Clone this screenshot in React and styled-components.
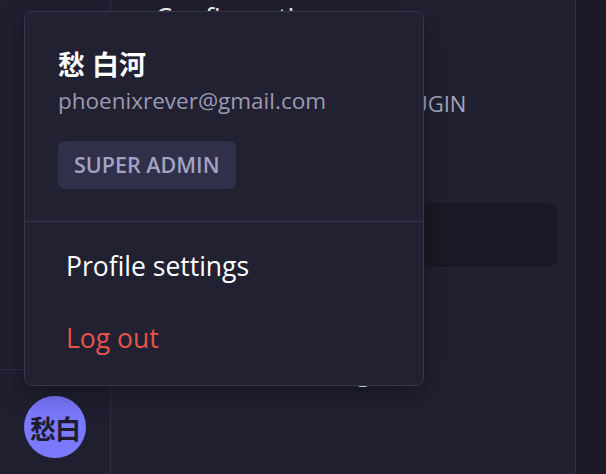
import React from 'react';
import styled, { createGlobalStyle } from 'styled-components';

const GlobalStyle = createGlobalStyle`
  html, body, #root {
    margin: 0;
    height: 100%;
  }
  body {
    background: #202031;
    font-family: "Open Sans", "Noto Sans CJK SC", sans-serif;
    overflow: hidden;
  }
`;

const Shell = styled.div`
  position: relative;
  display: flex;
  height: 100vh;
`;

const Sidebar = styled.aside`
  width: 110px;
  display: flex;
  flex-direction: column;
  justify-content: flex-end;
  background: #1f1f30;
  border-right: 1px solid #2e2e46;
`;

const SidebarFooter = styled.div`
  height: 105px;
  display: flex;
  justify-content: center;
  padding-top: 26px;
  box-sizing: border-box;
  border-top: 1px solid #2e2e46;
`;

const Avatar = styled.div`
  width: 62px;
  height: 62px;
  border-radius: 50%;
  background: #7b79ff;
  color: #1d1d2e;
  display: flex;
  align-items: center;
  justify-content: center;
  font-family: "Noto Sans CJK SC", sans-serif;
  font-weight: 700;
  font-size: 26px;
  letter-spacing: -1px;
  white-space: nowrap;
`;

const Main = styled.main`
  flex: 1;
  display: flex;
  flex-direction: column;
  padding: 0 18px 0 44px;
  background: #202031;
  border-right: 1px solid #2f2f48;
`;

const Heading = styled.h1`
  margin: 0;
  font-size: 27px;
  font-weight: 400;
  line-height: 36px;
  color: #ffffff;
`;

const FieldLabel = styled.div`
  margin-top: 53px;
  font-size: 22px;
  line-height: 28px;
  font-weight: 400;
  word-spacing: 11px;
  color: #a6a6bf;
  white-space: nowrap;
`;

const DarkCard = styled.div`
  margin-top: 86px;
  height: 64px;
  border-radius: 8px;
  background: #1a1a26;
`;

const SectionTitle = styled.div`
  margin-top: 86px;
  font-size: 27px;
  line-height: 34px;
  color: #ffffff;
  white-space: nowrap;
`;

const RightRail = styled.div`
  width: 30px;
  background: #1b1a26;
`;

const Menu = styled.div`
  position: absolute;
  left: 24px;
  top: 11px;
  width: 400px;
  height: 375px;
  box-sizing: border-box;
  background: #212132;
  border: 1px solid #36364f;
  border-radius: 8px;
  box-shadow: 0 8px 28px rgba(0, 0, 0, 0.35);
  display: flex;
  flex-direction: column;
`;

const MenuHeader = styled.div`
  display: flex;
  flex-direction: column;
  align-items: flex-start;
  padding: 34px 33px 32px;
  border-bottom: 1px solid #36364f;
`;

const UserName = styled.div`
  font-family: "Open Sans", "Noto Sans CJK SC", sans-serif;
  font-size: 27px;
  font-weight: 700;
  line-height: 37px;
  color: #ffffff;
`;

const Email = styled.div`
  font-size: 22.5px;
  line-height: 36px;
  color: #9a9ab2;
`;

const RoleBadge = styled.span`
  margin-top: 22px;
  padding: 0 16px;
  height: 48px;
  line-height: 48px;
  border-radius: 7px;
  background: #30304b;
  color: #a3a3c1;
  font-size: 21.5px;
  font-weight: 600;
`;

const MenuList = styled.div`
  padding: 8px 0 10px;
  display: flex;
  flex-direction: column;
`;

const MenuItem = styled.div`
  height: 72px;
  display: flex;
  align-items: center;
  padding-left: 41px;
  font-size: 26.5px;
  color: ${(p) => (p.danger ? '#e5534b' : '#ffffff')};
`;

export default function App() {
  return (
    <>
      <GlobalStyle />
      <Shell>
        <Sidebar>
          <SidebarFooter>
            <Avatar>愁白</Avatar>
          </SidebarFooter>
        </Sidebar>
        <Main>
          <Heading>Configuration</Heading>
          <FieldLabel>IDENTITY PROVIDER PLUGIN</FieldLabel>
          <DarkCard />
          <SectionTitle>Advanced settings</SectionTitle>
        </Main>
        <RightRail />
        <Menu>
          <MenuHeader>
            <UserName>愁 白河</UserName>
            <Email>phoenixrever@gmail.com</Email>
            <RoleBadge>SUPER ADMIN</RoleBadge>
          </MenuHeader>
          <MenuList>
            <MenuItem>Profile settings</MenuItem>
            <MenuItem danger>Log out</MenuItem>
          </MenuList>
        </Menu>
      </Shell>
    </>
  );
}
